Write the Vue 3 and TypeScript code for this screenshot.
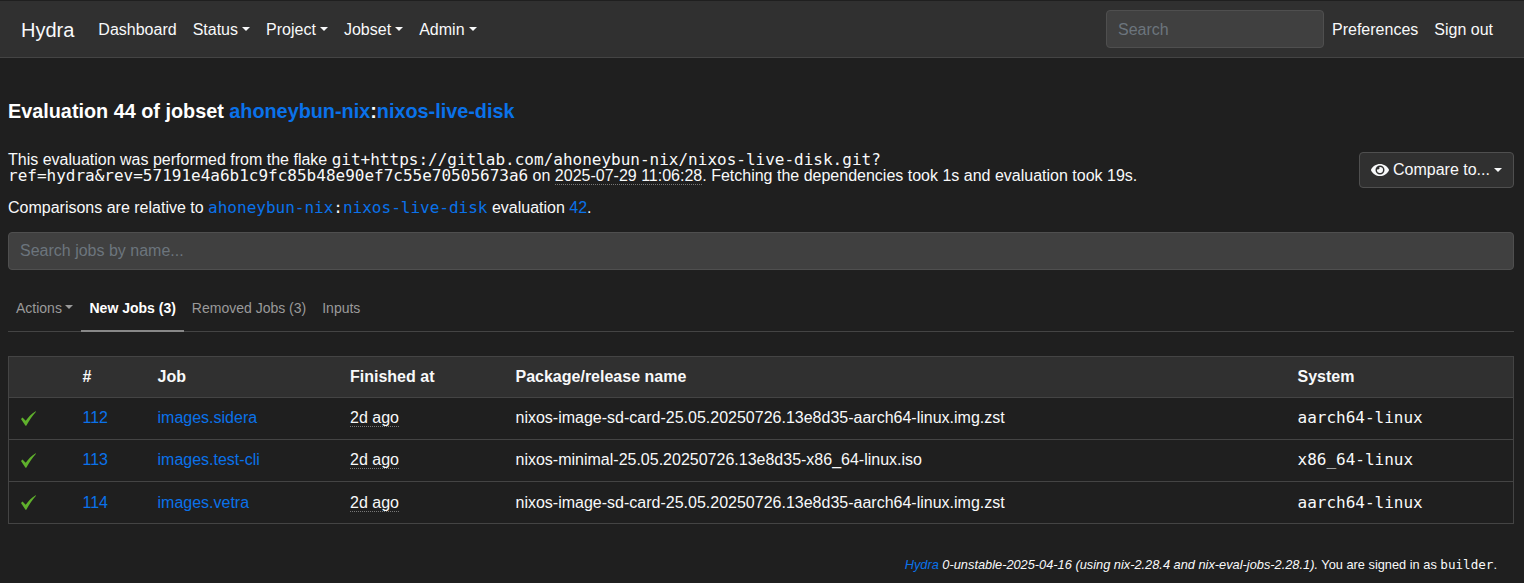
<script setup lang="ts">
interface Row { id: number; job: string; pkg: string; sys: string }
const rows: Row[] = [
  { id: 112, job: 'images.sidera', pkg: 'nixos-image-sd-card-25.05.20250726.13e8d35-aarch64-linux.img.zst', sys: 'aarch64-linux' },
  { id: 113, job: 'images.test-cli', pkg: 'nixos-minimal-25.05.20250726.13e8d35-x86_64-linux.iso', sys: 'x86_64-linux' },
  { id: 114, job: 'images.vetra', pkg: 'nixos-image-sd-card-25.05.20250726.13e8d35-aarch64-linux.img.zst', sys: 'aarch64-linux' },
]
</script>

<template>
  <div class="page">
    <nav class="navbar">
      <a class="brand">Hydra</a>
      <ul class="nav-links">
        <li>Dashboard</li>
        <li class="caret">Status</li>
        <li class="caret">Project</li>
        <li class="caret">Jobset</li>
        <li class="caret">Admin</li>
      </ul>
      <input class="nav-search" placeholder="Search" />
      <ul class="nav-links nav-right">
        <li>Preferences</li>
        <li>Sign out</li>
      </ul>
    </nav>

    <main class="container">
      <h2 class="title">Evaluation 44 of jobset <a>ahoneybun-nix</a>:<a>nixos-live-disk</a></h2>

      <div class="summary">
        <p class="flake">This evaluation was performed from the flake <code>git+https://gitlab.com/ahoneybun-nix/nixos-live-disk.git?ref=hydra&amp;rev=57191e4a6b1c9fc85b48e90ef7c55e70505673a6</code> on <time>2025-07-29 11:06:28</time>. Fetching the dependencies took 1s and evaluation took 19s.</p>
        <button class="compare caret">
          <svg class="eye" viewBox="0 0 576 512" aria-hidden="true"><path fill="currentColor" d="M572.52 241.4C518.29 135.59 410.93 64 288 64S57.68 135.64 3.48 241.41a32.35 32.35 0 0 0 0 29.19C57.71 376.41 165.07 448 288 448s230.32-71.64 284.52-177.41a32.35 32.35 0 0 0 0-29.19zM288 400a144 144 0 1 1 144-144 143.93 143.93 0 0 1-144 144zm0-240a95.31 95.31 0 0 0-25.31 3.79 47.85 47.85 0 0 1-66.9 66.9A95.78 95.78 0 1 0 288 160z"/></svg>
          Compare to...
        </button>
      </div>

      <p class="relative">Comparisons are relative to <code><a>ahoneybun-nix</a>:<a>nixos-live-disk</a></code> evaluation <a>42</a>.</p>

      <input class="job-search" placeholder="Search jobs by name..." />

      <ul class="tabs">
        <li class="caret">Actions</li>
        <li class="active">New Jobs (3)</li>
        <li>Removed Jobs (3)</li>
        <li>Inputs</li>
      </ul>

      <table class="jobs">
        <colgroup>
          <col class="c1" /><col class="c2" /><col class="c3" /><col class="c4" /><col class="c5" /><col />
        </colgroup>
        <thead>
          <tr><th></th><th>#</th><th>Job</th><th>Finished at</th><th>Package/release name</th><th>System</th></tr>
        </thead>
        <tbody>
          <tr v-for="r in rows" :key="r.id">
            <td class="status">
              <svg class="check" viewBox="0 0 16 16" aria-hidden="true"><path fill="#5fb02c" d="M0 8.4 1.6 7 5 10.4C7.6 6.6 11.4 2.6 15.6.2L16 .7C12.4 4.6 9 9.6 5.6 15.8H4.8Z"/></svg>
            </td>
            <td><a>{{ r.id }}</a></td>
            <td><a>{{ r.job }}</a></td>
            <td><time>2d ago</time></td>
            <td>{{ r.pkg }}</td>
            <td><code>{{ r.sys }}</code></td>
          </tr>
        </tbody>
      </table>

      <footer class="footer"><small><em><a>Hydra</a> 0-unstable-2025-04-16 (using nix-2.28.4 and nix-eval-jobs-2.28.1).</em> You are signed in as <code>builder</code>.</small></footer>
    </main>
  </div>
</template>

<style>
html, body { margin: 0; background: #1f1f1f; }
</style>

<style scoped>
.page {
  font-family: "Liberation Sans", Arial, sans-serif;
  font-size: 16px;
  line-height: 24px;
  color: #f8f9fa;
  background: #1f1f1f;
  min-height: 583px;
  box-sizing: border-box;
  padding-top: 1px;
}
a { color: #0a72ea; text-decoration: none; }
code {
  font-family: "DejaVu Sans Mono", monospace;
  font-size: 1em;
  line-height: 1;
}
ul { list-style: none; margin: 0; padding: 0; }
.caret::after {
  content: "";
  display: inline-block;
  margin-left: 0.255em;
  vertical-align: 0.255em;
  border-top: 0.3em solid currentColor;
  border-left: 0.3em solid transparent;
  border-right: 0.3em solid transparent;
}
.navbar {
  display: flex;
  align-items: center;
  height: 57px;
  box-sizing: border-box;
  padding: 0 31px 0 21px;
  background: #303030;
  border-bottom: 1px solid #444;
}
.brand { color: #f8f9fa; font-size: 20px; margin-right: 16px; padding-top: 2px; }
.nav-links { display: flex; gap: 16px; padding: 2px 0 0 8px; }
.nav-search {
  margin-left: auto;
  width: 218px;
  height: 38px;
  box-sizing: border-box;
  padding: 7px 11px 5px;
  font: inherit;
  color: #f8f9fa;
  background: #404040;
  border: 1px solid #4f4f4f;
  border-radius: 4px;
}
input::placeholder { color: #6c757d; opacity: 1; }
.container { padding: 0 10px 0 8px; }
.title {
  margin: 41px 0 0;
  font-size: 19.82px;
  line-height: 24px;
  font-weight: 700;
  color: #fff;
}
.summary {
  display: flex;
  align-items: flex-start;
  gap: 24px;
  margin-top: 29px;
}
.flake { flex: 1; margin: 0; line-height: 16px; }
time { border-bottom: 1px dotted #777; }
.compare {
  display: inline-flex;
  align-items: center;
  height: 36px;
  padding: 0 11px;
  font: inherit;
  color: #f8f9fa;
  background: #303030;
  border: 1px solid #4f4f4f;
  border-radius: 4px;
  white-space: nowrap;
}
.eye { width: 18px; height: 16px; margin-right: 4px; }
.relative { margin: 8px 0 0; }
.job-search {
  display: block;
  width: 100%;
  height: 38px;
  box-sizing: border-box;
  margin-top: 12px;
  padding: 6px 11px;
  font: inherit;
  color: #f8f9fa;
  background: #404040;
  border: 1px solid #4f4f4f;
  border-radius: 4px;
}
.tabs {
  display: flex;
  margin-top: 17px;
  border-bottom: 1px solid #444;
  font-size: 14px;
  color: #9a9a9a;
}
.tabs li { padding: 8px 8px 11px; line-height: 26px; margin-bottom: -1px; }
.tabs .active { color: #fff; font-weight: 700; border-bottom: 2px solid #888; padding-bottom: 9px; }
.jobs {
  width: 1506px;
  margin-top: 24px;
  border-collapse: collapse;
  table-layout: fixed;
  border: 1px solid #444;
}
.c1 { width: 62px; }
.c2 { width: 75px; }
.c3 { width: 192.5px; }
.c4 { width: 165.5px; }
.c5 { width: 782px; }
th {
  background: #303030;
  font-weight: 700;
  text-align: left;
  padding: 8px 12px;
  height: 24px;
  color: #f8f9fa;
}
td {
  padding: 8px 12px 9px;
  border-top: 1px solid #444;
  height: 24px;
}
tr:last-child td { padding: 9px 12px 8px; }
td.status, tr:last-child td.status { padding: 13px 12px 0; vertical-align: top; }
.check { display: block; width: 15px; height: 15px; }
.footer {
  margin-top: 28px;
  text-align: right;
  padding-right: 17px;
}
small { font-size: 12.8px; }
small code { font-size: 12.6px; }
</style>
